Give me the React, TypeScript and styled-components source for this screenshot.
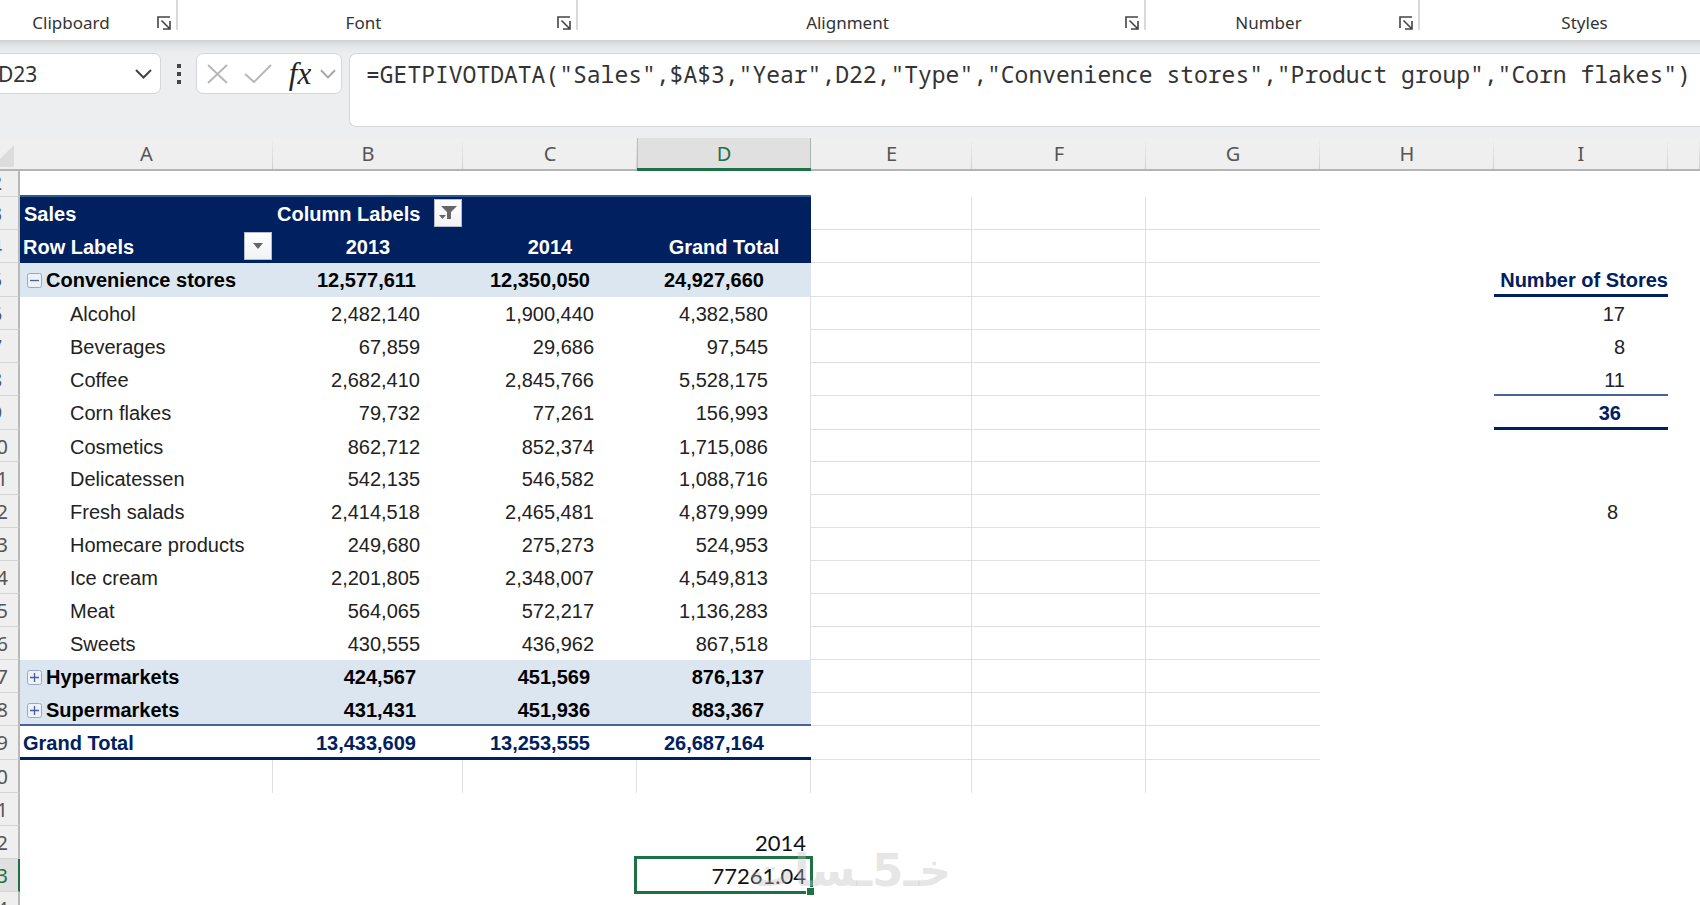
import React from "react";
import styled, { createGlobalStyle, css } from "styled-components";

const ui = `"Noto Sans", "Open Sans", sans-serif`;
const arial = `"Liberation Sans", Arial, sans-serif`;
const navy = "#002060";
const green = "#1e7145";
const gridLine = "#dfdfdf";

const GlobalStyle = createGlobalStyle`
  *, *::before, *::after { box-sizing: border-box; }
  body { margin: 0; background: #fff; overflow: hidden; }
  button, input, textarea { font: inherit; color: inherit; border: 0; margin: 0; padding: 0; background: none; }
  button { cursor: pointer; }
`;

const Viewport = styled.main`
  height: 100vh;
  overflow: hidden;
  position: relative;
  font-family: ${ui};
`;

/* The window is scrolled slightly past its left edge. */
const Workbook = styled.div`
  margin-left: -25px;
`;

const Ribbon = styled.div`
  display: flex;
  height: 40px;
  background: #fff;
  color: #333;
  font-size: 17px;
  line-height: 24px;
`;

const RibbonGroup = styled.section<{ $width?: number; $inset?: number }>`
  flex: ${(p) => (p.$width ? `0 0 ${p.$width}px` : "1 1 0")};
  height: 30px;
  display: flex;
  align-items: flex-end;
  padding: 0 5px 0 ${(p) => p.$inset ?? 0}px;
  border-right: ${(p) => (p.$width ? "2px solid #d9d9d9" : "0")};
`;

const GroupLabel = styled.span`
  flex: 1;
  text-align: center;
  height: 20px;
  line-height: 26px;
`;

const Launcher = styled.button`
  width: 22px;
  height: 14px;
  display: flex;
  justify-content: flex-end;
`;

const FormulaBar = styled.div`
  display: flex;
  align-items: flex-start;
  height: 98px;
  padding-top: 13px;
  background: linear-gradient(#cfcfd0 0, #dcdddf 3px, #e6e7e9 8px, #edeef0 14px);
  color: #444;
`;

const box = css`
  background: #fff;
  border: 1px solid #d6d6d8;
  border-radius: 7px;
`;

const NameBox = styled.div`
  ${box}
  width: 186px;
  height: 41px;
  display: flex;
  align-items: center;
  padding: 0 8px 0 22px;
`;

const NameInput = styled.input`
  flex: 1;
  min-width: 0;
  font-size: 21px;
  line-height: 28px;
  color: #333;
`;

const IconButton = styled.button<{ $width: number }>`
  width: ${(p) => p.$width}px;
  height: 38px;
  display: flex;
  align-items: center;
  justify-content: center;
`;

const FxButton = styled(IconButton)`
  font: italic 400 31px/36px "Liberation Serif", serif;
  color: #222;
`;

const Dots = styled.span`
  width: 35px;
  height: 41px;
  display: flex;
  align-items: center;
  justify-content: center;
`;

const FormulaButtons = styled.div`
  ${box}
  width: 146px;
  height: 41px;
  display: flex;
  align-items: center;
  padding-left: 4px;
`;

const FormulaInput = styled.textarea`
  flex: 1;
  height: 74px;
  margin-left: 7px;
  padding: 7px 0 0 16px;
  resize: none;
  overflow: hidden;
  white-space: pre;
  font: 23px/26px "Noto Sans Mono", "DejaVu Sans Mono", "Liberation Mono", monospace;
  color: #333;
  && {
    background: #fff;
    border: 1px solid #d6d6d8;
    border-right: 0;
    border-radius: 7px 0 0 7px;
  }
`;

const Sheet = styled.table`
  width: 100%;
  table-layout: fixed;
  border-collapse: separate;
  border-spacing: 0;
  font: 20px/26px ${arial};
  color: #222;
`;

const Col = styled.col<{ $width?: number }>`
  width: ${(p) => (p.$width ? `${p.$width}px` : "auto")};
`;

const ColumnHead = styled.th<{ $active?: boolean }>`
  height: 33px;
  padding: 2px 0 0;
  font: 20px/28px ${ui};
  vertical-align: top;
  color: ${(p) => (p.$active ? green : "#555")};
  background: ${(p) =>
    p.$active
      ? "#e0e0e0"
      : "linear-gradient(#efefef, #cfcfcf) right / 1px 100% no-repeat, #efefef"};
  border-bottom: ${(p) => (p.$active ? `3px solid ${green}` : "2px solid #b4b4b4")};
  box-shadow: ${(p) => (p.$active ? "inset 1px 0 #bdbdbd, inset -1px 0 #a9b8af" : "none")};
`;

const Corner = styled(ColumnHead)`
  background: #efefef;
  text-align: right;
`;

const CornerMark = styled.svg`
  display: block;
  margin: 5px 6px 0 auto;
`;

const RowHead = styled.th<{ $active?: boolean; $short?: boolean }>`
  padding: ${(p) => (p.$short ? 0 : 3)}px 0 0;
  vertical-align: top;
  font: 20px/26px ${ui};
  color: ${(p) => (p.$active ? green : "#555")};
  background: ${(p) => (p.$active ? "#e0e0e0" : "#efefef")};
  border-bottom: 1px solid #d4d4d4;
  border-right: 2px solid ${(p) => (p.$active ? green : "#b8b8b8")};
  line-height: ${(p) => (p.$short ? 24 : 28)}px;
`;

const Row = styled.tr<{ $height: number }>`
  height: ${(p) => p.$height}px;
`;

type Tone = "plain" | "head" | "group" | "total";

interface CellProps {
  $tone?: Tone;
  $align?: "left" | "center" | "right";
  $pad?: number;
  $line?: string;
  $right?: boolean;
}

const Cell = styled.td<CellProps>`
  position: relative;
  padding: 4px ${(p) => (p.$align === "right" ? p.$pad ?? 0 : 0)}px 0
    ${(p) => (!p.$align || p.$align === "left" ? p.$pad ?? 0 : 0)}px;
  vertical-align: top;
  white-space: nowrap;
  text-align: ${(p) => p.$align ?? "left"};
  font-weight: ${(p) => (p.$tone && p.$tone !== "plain" ? 700 : 400)};
  color: ${(p) =>
    p.$tone === "head" ? "#fff" : p.$tone === "total" ? navy : p.$tone === "group" ? "#000" : "#222"};
  background: ${(p) => (p.$tone === "head" ? navy : p.$tone === "group" ? "#dce6f1" : "transparent")};
  border-bottom: ${(p) => p.$line ?? "0"};
  border-right: ${(p) => (p.$right ? `1px solid ${gridLine}` : "0")};
`;

const ShortCell = styled(Cell)`
  padding: 0;
`;

const CalcCell = styled(Cell)`
  font-family: Lato, sans-serif;
  font-size: 22px;
  color: #111;
`;

const FilterButton = styled.button`
  && {
    position: absolute;
    top: 2px;
    right: 1px;
    width: 28px;
    height: 28px;
    display: flex;
    align-items: center;
    justify-content: center;
    background: linear-gradient(#fff, #f1f2f5);
    border: 1px solid #b9bcc4;
  }
`;

const GroupName = styled.div`
  display: flex;
  align-items: center;
  gap: 4px;
`;

const Toggle = styled.button`
  width: 15px;
  height: 15px;
  display: flex;
`;

const Selection = styled.span`
  position: absolute;
  inset: -3px -2px -2px -3px;
  border: 3px solid ${green};
  pointer-events: none;
  &::after {
    content: "";
    position: absolute;
    right: -5px;
    bottom: -5px;
    width: 9px;
    height: 9px;
    background: ${green};
    border: 1px solid #fff;
  }
`;

const Watermark = styled.div`
  position: absolute;
  left: 50%;
  bottom: 4px;
  transform: translateX(-50%);
  white-space: nowrap;
  font: 700 45px/60px "DejaVu Sans", sans-serif;
  color: rgba(190, 190, 190, 0.4);
  pointer-events: none;
`;

const LauncherIcon = () => (
  <svg width="14" height="14" viewBox="0 0 14 14" fill="none" stroke="#444" strokeWidth="1.6">
    <path d="M1 12V1h12" />
    <path d="M4.500 4.500l8 8M13 5v8H6" />
  </svg>
);

const Chevron = ({ color, width = 17 }: { color: string; width?: number }) => (
  <svg width={width} height="10" viewBox="0 0 17 10" fill="none" stroke={color} strokeWidth="2">
    <path d="M1 1l7.500 7.500L16 1" />
  </svg>
);

const ToggleIcon = ({ open }: { open: boolean }) => (
  <svg width="15" height="15" viewBox="0 0 15 15" fill="none">
    <rect x="0.500" y="0.500" width="14" height="14" rx="2" fill="#eef2f8" stroke="#98a8c4" />
    <path d={open ? "M3 7.500h9" : "M3 7.500h9M7.500 3v9"} stroke="#44609c" strokeWidth="1.300" />
  </svg>
);

const groups = [
  { name: "Clipboard", width: 203, inset: 18 },
  { name: "Font", width: 400 },
  { name: "Alignment", width: 568 },
  { name: "Number", width: 274 },
];

const columns = [
  { name: "A", width: 253 },
  { name: "B", width: 190 },
  { name: "C", width: 174 },
  { name: "D", width: 174 },
  { name: "E", width: 161 },
  { name: "F", width: 174 },
  { name: "G", width: 174 },
  { name: "H", width: 174 },
  { name: "I", width: 174 },
];

type Kind = "item" | "open" | "closed" | "total";

interface PivotRow {
  kind: Kind;
  label: string;
  values: string[];
}

const pivot: PivotRow[] = [
  { kind: "open", label: "Convenience stores", values: ["12,577,611", "12,350,050", "24,927,660"] },
  { kind: "item", label: "Alcohol", values: ["2,482,140", "1,900,440", "4,382,580"] },
  { kind: "item", label: "Beverages", values: ["67,859", "29,686", "97,545"] },
  { kind: "item", label: "Coffee", values: ["2,682,410", "2,845,766", "5,528,175"] },
  { kind: "item", label: "Corn flakes", values: ["79,732", "77,261", "156,993"] },
  { kind: "item", label: "Cosmetics", values: ["862,712", "852,374", "1,715,086"] },
  { kind: "item", label: "Delicatessen", values: ["542,135", "546,582", "1,088,716"] },
  { kind: "item", label: "Fresh salads", values: ["2,414,518", "2,465,481", "4,879,999"] },
  { kind: "item", label: "Homecare products", values: ["249,680", "275,273", "524,953"] },
  { kind: "item", label: "Ice cream", values: ["2,201,805", "2,348,007", "4,549,813"] },
  { kind: "item", label: "Meat", values: ["564,065", "572,217", "1,136,283"] },
  { kind: "item", label: "Sweets", values: ["430,555", "436,962", "867,518"] },
  { kind: "closed", label: "Hypermarkets", values: ["424,567", "451,569", "876,137"] },
  { kind: "closed", label: "Supermarkets", values: ["431,431", "451,936", "883,367"] },
  { kind: "total", label: "Grand Total", values: ["13,433,609", "13,253,555", "26,687,164"] },
];

const thick = `3px solid ${navy}`;
const medium = "2px solid #4a629c";

const stores: Record<number, CellProps & { text: string }> = {
  5: { text: "Number of Stores", $tone: "total", $pad: 0, $line: thick },
  6: { text: "17", $pad: 43 },
  7: { text: "8", $pad: 43 },
  8: { text: "11", $pad: 43, $line: medium },
  9: { text: "36", $tone: "total", $pad: 47, $line: thick },
  12: { text: "8", $pad: 50 },
};

const rowHeights: Record<number, number> = { 5: 34, 9: 34, 10: 32, 19: 34 };
const heightOf = (row: number) => rowHeights[row] ?? 33;

const RightCells = ({ row }: { row: number }) => {
  const line = row <= 19 ? `1px solid ${gridLine}` : undefined;
  const { text, ...style } = stores[row] ?? { text: "" };
  return (
    <>
      <Cell $line={line} $right />
      <Cell $line={line} $right />
      <Cell $line={line} />
      <Cell />
      <Cell $align="right" {...style}>{text}</Cell>
      <Cell />
    </>
  );
};

const PivotLine = ({ row, data }: { row: number; data: PivotRow }) => {
  const { kind, label, values } = data;
  const tone: Tone = kind === "item" ? "plain" : kind === "total" ? "total" : "group";
  const line = kind === "total" ? thick : row === 18 ? medium : undefined;
  const expandable = kind === "open" || kind === "closed";
  return (
    <Row $height={heightOf(row)}>
      <RowHead scope="row">{row}</RowHead>
      <Cell $tone={tone} $line={line} $pad={kind === "item" ? 50 : kind === "total" ? 3 : 7}>
        {expandable ? (
          <GroupName>
            <Toggle aria-label={`Toggle ${label}`}>
              <ToggleIcon open={kind === "open"} />
            </Toggle>
            {label}
          </GroupName>
        ) : (
          label
        )}
      </Cell>
      {values.map((value, i) => (
        <Cell
          key={i}
          $tone={tone}
          $line={line}
          $align="right"
          $pad={(kind === "item" ? 43 : 47) - (i === 2 && kind === "item" ? 1 : 0)}
          $right={i === 2 && kind === "item"}
        >
          {value}
        </Cell>
      ))}
      <RightCells row={row} />
    </Row>
  );
};

export default function App() {
  return (
    <Viewport>
      <GlobalStyle />
      <Workbook>
        <Ribbon>
          {groups.map((g) => (
            <RibbonGroup key={g.name} $width={g.width} $inset={g.inset}>
              <GroupLabel>{g.name}</GroupLabel>
              <Launcher aria-label={`${g.name} settings`}>
                <LauncherIcon />
              </Launcher>
            </RibbonGroup>
          ))}
          <RibbonGroup $inset={54}>
            <GroupLabel>Styles</GroupLabel>
          </RibbonGroup>
        </Ribbon>

        <FormulaBar>
          <NameBox>
            <NameInput aria-label="Name box" defaultValue="D23" />
            <IconButton $width={18} aria-label="Open name list">
              <Chevron color="#444" />
            </IconButton>
          </NameBox>
          <Dots>
            <svg width="4" height="20" viewBox="0 0 4 20" fill="#444">
              <path d="M0 0h4v4H0zM0 8h4v4H0zM0 16h4v4H0z" />
            </svg>
          </Dots>
          <FormulaButtons>
            <IconButton $width={32} aria-label="Cancel">
              <svg width="21" height="20" viewBox="0 0 21 20" stroke="#b5b5b5" strokeWidth="1.800">
                <path d="M1 1l19 18M20 1L1 19" />
              </svg>
            </IconButton>
            <IconButton $width={50} aria-label="Enter">
              <svg width="28" height="20" viewBox="0 0 28 20" fill="none" stroke="#b5b5b5" strokeWidth="1.800">
                <path d="M1 10l9 8L27 1" />
              </svg>
            </IconButton>
            <FxButton $width={34} aria-label="Insert function">fx</FxButton>
            <IconButton $width={22} aria-label="More functions">
              <Chevron color="#a5a5a5" width={16} />
            </IconButton>
          </FormulaButtons>
          <FormulaInput
            aria-label="Formula"
            wrap="off"
            spellCheck={false}
            defaultValue={'=GETPIVOTDATA("Sales",$A$3,"Year",D22,"Type","Convenience stores","Product group","Corn flakes")'}
          />
        </FormulaBar>

        <Sheet>
          <colgroup>
            <Col $width={45} />
            {columns.map((c) => (
              <Col key={c.name} $width={c.width} />
            ))}
            <Col />
          </colgroup>
          <thead>
            <tr>
              <Corner>
                <CornerMark width="22" height="22" viewBox="0 0 22 22" fill="#dcdcdc">
                  <path d="M22 0v22H0z" />
                </CornerMark>
              </Corner>
              {columns.map((c) => (
                <ColumnHead key={c.name} scope="col" $active={c.name === "D"}>
                  {c.name}
                </ColumnHead>
              ))}
              <ColumnHead />
            </tr>
          </thead>
          <tbody>
            <Row $height={26}>
              <RowHead scope="row" $short>2</RowHead>
              {["A", "B", "C", "D"].map((c) => (
                <ShortCell key={c} $line="2px solid #2f5b8e" />
              ))}
              <ShortCell colSpan={6} />
            </Row>
            <Row $height={heightOf(3)}>
              <RowHead scope="row">3</RowHead>
              <Cell $tone="head" $pad={4}>Sales</Cell>
              <Cell $tone="head" $pad={4}>
                Column Labels
                <FilterButton aria-label="Filter columns">
                  <svg width="18" height="16" viewBox="0 0 18 16" fill="#666">
                    <path d="M2 1h16l-6 6v7H8V7zM0 10h7l-3.500 4z" />
                  </svg>
                </FilterButton>
              </Cell>
              <Cell $tone="head" />
              <Cell $tone="head" />
              <RightCells row={3} />
            </Row>
            <Row $height={heightOf(4)}>
              <RowHead scope="row">4</RowHead>
              <Cell $tone="head" $pad={3}>
                Row Labels
                <FilterButton aria-label="Filter rows">
                  <svg width="10" height="6" viewBox="0 0 10 6" fill="#666">
                    <path d="M0 0h10L5 6z" />
                  </svg>
                </FilterButton>
              </Cell>
              <Cell $tone="head" $align="center">2013</Cell>
              <Cell $tone="head" $align="center">2014</Cell>
              <Cell $tone="head" $align="center">Grand Total</Cell>
              <RightCells row={4} />
            </Row>
            {pivot.map((data, i) => (
              <PivotLine key={data.label} row={i + 5} data={data} />
            ))}
            <Row $height={heightOf(20)}>
              <RowHead scope="row">20</RowHead>
              <Cell $right />
              <Cell $right />
              <Cell $right />
              <Cell $right />
              <RightCells row={20} />
            </Row>
            <Row $height={heightOf(21)}>
              <RowHead scope="row">21</RowHead>
              <Cell colSpan={10} />
            </Row>
            <Row $height={heightOf(22)}>
              <RowHead scope="row">22</RowHead>
              <Cell colSpan={3} />
              <CalcCell $align="right" $pad={5}>2014</CalcCell>
              <Cell colSpan={6} />
            </Row>
            <Row $height={heightOf(23)}>
              <RowHead scope="row" $active>23</RowHead>
              <Cell colSpan={3} />
              <CalcCell $align="right" $pad={5}>
                77261.04
                <Selection />
              </CalcCell>
              <Cell colSpan={6} />
            </Row>
            <Row $height={heightOf(24)}>
              <RowHead scope="row">24</RowHead>
              <Cell colSpan={10} />
            </Row>
          </tbody>
        </Sheet>
      </Workbook>
      <Watermark dir="rtl" lang="ar">خـ5ـسات</Watermark>
    </Viewport>
  );
}
